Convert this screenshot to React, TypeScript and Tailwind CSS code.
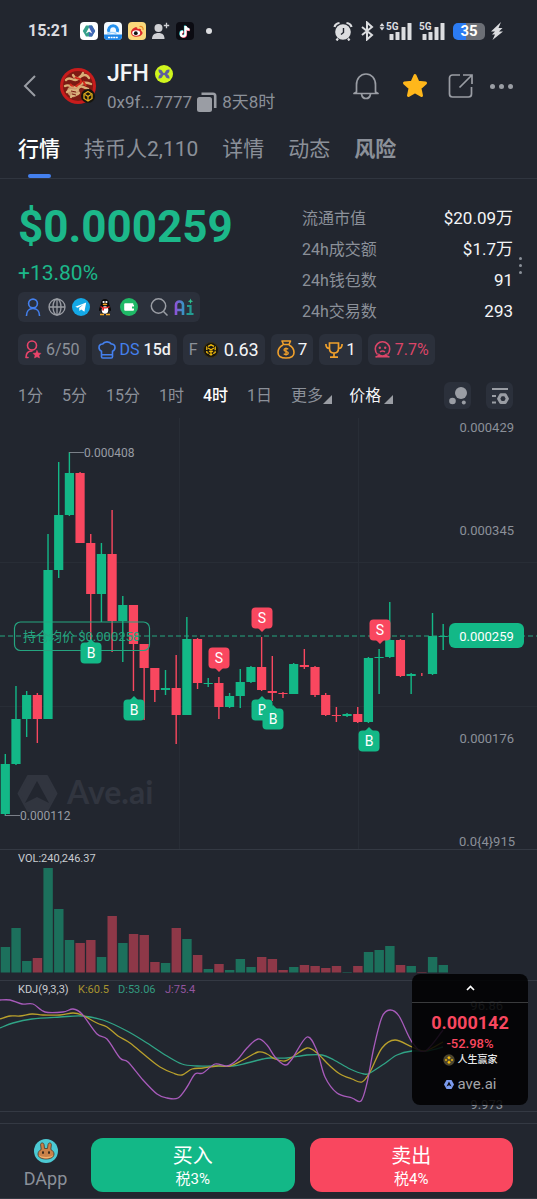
import React, { useState } from "react";

const GREEN = "#13b887";
const RED = "#f9475f";

// [open/close top, open/close bottom, high, low, volume top, rising]
type Candle = [number, number, number, number, number, boolean];

const candles: Candle[] = [
  [764, 814, 754, 816, 947, true],
  [719, 764, 686, 765, 928, true],
  [695, 719, 691, 737, 961, true],
  [695, 719, 693, 743, 958, false],
  [570, 719, 534, 719, 868, true],
  [515, 570, 462, 578, 909, true],
  [473, 515, 452, 516, 940, true],
  [473, 543, 472, 543, 943, false],
  [543, 594, 534, 640, 940, false],
  [554, 594, 543, 622, 957, true],
  [554, 621, 510, 652, 916, false],
  [605, 621, 596, 662, 943, true],
  [605, 644, 605, 691, 934, false],
  [644, 668, 644, 720, 935, false],
  [668, 690, 668, 702, 962, false],
  [688, 690, 670, 695, 963, true],
  [688, 715, 655, 744, 928, false],
  [639, 715, 617, 715, 939, true],
  [639, 683, 638, 689, 955, false],
  [683, 684, 678, 687, 969, true],
  [683, 707, 677, 719, 964, false],
  [696, 707, 693, 708, 970, true],
  [682, 696, 669, 708, 959, true],
  [667, 682, 666, 683, 967, true],
  [667, 690, 637, 691, 957, false],
  [691, 693, 656, 701, 959, false],
  [693, 694, 692, 698, 970, false],
  [664, 694, 663, 694, 967, true],
  [665, 667, 649, 669, 965, false],
  [667, 695, 666, 697, 966, false],
  [695, 715, 693, 716, 968, false],
  [715, 716, 707, 722, 966, false],
  [714, 716, 713, 717, 972, true],
  [714, 722, 707, 723, 966, false],
  [658, 722, 657, 723, 952, true],
  [657, 658, 649, 694, 950, true],
  [640, 657, 602, 658, 946, true],
  [640, 676, 639, 677, 965, false],
  [674, 676, 673, 694, 966, true],
  [674, 675, 673, 676, 972, false],
  [636, 674, 613, 675, 957, true],
  [636, 637, 624, 650, 965, true],
];

const markers: { x: number; y: number; side: "B" | "S" }[] = [
  { x: 91, y: 653, side: "B" },
  { x: 134, y: 710, side: "B" },
  { x: 262, y: 710, side: "B" },
  { x: 273, y: 719, side: "B" },
  { x: 369, y: 741, side: "B" },
  { x: 219, y: 658, side: "S" },
  { x: 262, y: 618, side: "S" },
  { x: 380, y: 630, side: "S" },
];

const kLine = [
  [0, 1019], [10, 1016], [20, 1016], [32, 1014], [43, 1015], [60, 1015], [73, 1013], [82, 1015], [97, 1023],
  [107, 1027], [118, 1036], [130, 1043], [147, 1057], [160, 1067], [173, 1073], [182, 1075], [192, 1069],
  [203, 1068], [217, 1066], [230, 1066], [243, 1060], [258, 1052], [267, 1054], [275, 1059], [285, 1061],
  [294, 1056], [307, 1048], [317, 1053], [329, 1065], [340, 1074], [352, 1079], [362, 1082], [370, 1072],
  [382, 1048], [395, 1040], [412, 1047], [425, 1051], [443, 1042],
];
const dLine = [
  [0, 1028], [13, 1023], [32, 1019], [60, 1017], [82, 1016], [103, 1020], [127, 1031], [147, 1043], [167, 1056],
  [182, 1064], [197, 1066], [213, 1066], [233, 1066], [247, 1063], [263, 1059], [270, 1058], [287, 1058],
  [307, 1055], [322, 1055], [334, 1060], [350, 1069], [364, 1074], [370, 1073], [384, 1064], [397, 1055],
  [412, 1051], [427, 1051], [443, 1047],
];
const jLine = [
  [0, 1000], [10, 1000], [22, 1004], [33, 1004], [45, 1012], [63, 1012], [73, 1009], [82, 1014], [97, 1034],
  [107, 1039], [120, 1058], [128, 1062], [143, 1080], [157, 1094], [167, 1098], [178, 1098], [187, 1087],
  [195, 1074], [203, 1073], [215, 1064], [227, 1066], [237, 1060], [247, 1048], [258, 1039], [267, 1045],
  [275, 1057], [285, 1065], [292, 1059], [307, 1037], [317, 1051], [325, 1077], [337, 1093], [352, 1098],
  [361, 1101], [367, 1083], [374, 1047], [382, 1017], [390, 1010], [399, 1016], [412, 1042], [425, 1051],
  [443, 1030],
];

function candleX(i: number) {
  return 5.3 + i * 10.68;
}

// Catmull-Rom to bezier
function smooth(pts: number[][]) {
  let d = `M${pts[0][0]} ${pts[0][1]}`;
  for (let i = 0; i < pts.length - 1; i++) {
    const p0 = pts[i - 1] ?? pts[i];
    const p1 = pts[i];
    const p2 = pts[i + 1];
    const p3 = pts[i + 2] ?? p2;
    d += `C${p1[0] + (p2[0] - p0[0]) / 6} ${p1[1] + (p2[1] - p0[1]) / 6} ${p2[0] - (p3[0] - p1[0]) / 6} ${
      p2[1] - (p3[1] - p1[1]) / 6
    } ${p2[0]} ${p2[1]}`;
  }
  return d;
}

export default function App() {
  return (
    <div className="w-full overflow-hidden bg-[#22262f] font-['Roboto','Noto_Sans_CJK_SC',sans-serif] text-[#8b9099]">
      <StatusBar />
      <Header />
      <Tabs />
      <main>
        <Summary />
        <Chips />
        <Timeframes />
        <Charts />
      </main>
      <Footer />
    </div>
  );
}

function Signal({ arrows }: { arrows?: boolean }) {
  return (
    <svg className="h-5 w-[34px]" viewBox="0 0 34 20" fill="#dcdde0">
      {arrows && <path d="M3 2l2.500 3.200h-5zM3 9.500l2.500-3.200h-5z" />}
      <text x="7" y="9" fontSize="10" fontWeight="700">5G</text>
      <rect x="10.500" y="13" width="4" height="6" rx="0.500" />
      <rect x="16.500" y="11" width="4" height="8" rx="0.500" />
      <rect x="22.500" y="6" width="4" height="13" rx="0.500" />
      <rect x="28.500" y="2" width="4" height="17" rx="0.500" />
    </svg>
  );
}

function StatusBar() {
  return (
    <div className="flex h-[62px] items-center justify-between pr-[34px] pl-7 text-[#dcdde0]">
      <div className="flex items-center gap-[6px]">
        <span className="mr-[5px] text-[16px] font-bold">15:21</span>
        <svg className="size-[18px]" viewBox="0 0 18 18">
          <rect width="18" height="18" rx="4" fill="#fff" />
          <path d="M6 3.500h6l3.200 5.500L12 14.500H6L2.800 9z" fill="#35a08a" />
          <path d="M12 3.500L15.200 9 12 14.500H9V3.500z" fill="#4267b5" />
          <path d="M9 5.500l3.200 6L9 9.800l-3.200 1.700z" fill="#fff" />
        </svg>
        <svg className="size-[18px]" viewBox="0 0 18 18">
          <rect width="18" height="18" rx="4" fill="#f4faff" />
          <path d="M0 12.500h18V14a4 4 0 01-4 4H4a4 4 0 01-4-4z" fill="#1e86e8" />
          <path d="M5 10A4.500 4.500 0 1113.200 10" fill="none" stroke="#2492f0" strokeWidth="3" />
          <path d="M3.500 12c2-2 6-2 9-.5" fill="none" stroke="#9fd2fb" strokeWidth="1.500" />
          <path d="M4 15.500h10" stroke="#fff" strokeWidth="1.600" strokeDasharray="2 .6" />
        </svg>
        <svg className="size-[18px]" viewBox="0 0 18 18">
          <rect width="18" height="18" rx="4" fill="#fbd97b" />
          <path d="M3 10.500c0-3 4-6 6-5 .8.500.5 1.500.5 1.500s3-1 3.500.5c.3.900 0 1.500 0 1.500s2 .6 1.500 2.500c-.6 2-3.500 3.300-6.500 3.300S3 13 3 10.500z" fill="#dc2a2a" />
          <ellipse cx="8.200" cy="11" rx="4" ry="2.800" fill="#fff" />
          <circle cx="7.800" cy="11.200" r="1.900" fill="#111" />
          <path d="M11.500 4.500c2.500-.6 4 1.200 3.500 3.500" fill="none" stroke="#ef8b27" strokeWidth="1.200" />
        </svg>
        <svg className="h-[18px] w-[18px]" viewBox="0 0 18 18" fill="#cfd0d4">
          <circle cx="6.500" cy="6" r="4" />
          <path d="M0 17c0-4 2.500-6 6.500-6s6 2 6 6z" />
          <path d="M14.500.800v5.400M11.800 3.500h5.400" stroke="#cfd0d4" strokeWidth="1.300" />
        </svg>
        <svg className="size-[18px]" viewBox="0 0 18 18">
          <rect width="18" height="18" rx="4" fill="#0b0b12" />
          <g fill="none" strokeWidth="2.200">
            <path d="M9 3.500v8a2.300 2.300 0 11-2.300-2.300M9 4c.4 2 1.800 3 4 3.200" stroke="#35e0e0" />
            <path d="M10 4.500v8a2.300 2.300 0 11-2.300-2.300M10 5c.4 2 1.800 3 4 3.200" stroke="#f2385a" />
            <path d="M9.500 4v8a2.300 2.300 0 11-2.300-2.300M9.500 4.500c.4 2 1.800 3 4 3.200" stroke="#fff" />
          </g>
        </svg>
        <span className="ml-[6px] size-[6px] rounded-full bg-[#dcdde0]" />
      </div>
      <div className="flex items-center">
        <svg className="h-5 w-5" viewBox="0 0 20 20">
          <circle cx="10" cy="11" r="7.800" fill="#dcdde0" />
          <path d="M1.500 6C2 4 4 2.200 6.500 2M18.500 6C18 4 16 2.200 13.500 2M5 17.500l-1.500 2M15 17.500l1.500 2" fill="none" stroke="#dcdde0" strokeWidth="2.200" />
          <path d="M10.500 7v4.500L8 13.500" fill="none" stroke="#22262f" strokeWidth="1.400" />
        </svg>
        <svg className="ml-[6px] h-5 w-[16px]" viewBox="0 0 16 20" fill="none" stroke="#dcdde0" strokeWidth="2">
          <path d="M3 6l10 8-5 4.500v-17L13 6 3 14" />
        </svg>
        <span className="ml-1"><Signal arrows /></span>
        <span className="-ml-px"><Signal /></span>
        <span className="ml-[7px] flex h-[17px] w-8 items-center justify-center rounded-[5px] bg-linear-to-r from-[#2b7bf3] from-40% to-[#6c6f76] to-40% text-[15px] leading-none font-bold text-white">
          35
        </span>
        <svg className="ml-[6px] h-[18px] w-3" viewBox="0 0 12 18" fill="#dcdde0">
          <path d="M10 0L0 9.500h4L1 12.500h3L1.500 18 12 9.500H8L11.500 6H7.500z" />
        </svg>
      </div>
    </div>
  );
}

function BnbCoin({ className }: { className: string }) {
  return (
    <svg className={className} viewBox="0 0 16 16">
      <circle cx="8" cy="8" r="7.500" fill="#16140f" stroke="#39311b" />
      <g fill="none" stroke="#f0b90b" strokeWidth="1.300">
        <path d="M8 2.800L12.200 5v5.500L8 13 3.800 10.500V5z" strokeDasharray="3.500 1" />
        <path d="M5 6l3 1.700L11 6M8 7.700V12M6 9l2 1.200L10 9" />
      </g>
    </svg>
  );
}

function Header() {
  return (
    <header className="flex h-12 items-center pr-6 pl-[22px]">
      <button aria-label="返回">
        <svg className="h-6 w-4" viewBox="0 0 16 24" fill="none" stroke="#9a9da4" strokeWidth="2">
          <path d="M13 2L3 12l10 10" />
        </svg>
      </button>
      <svg className="ml-[21px] size-[38px]" viewBox="0 0 38 38">
        <circle cx="19" cy="19" r="18" fill="#c81c1c" />
        <circle cx="19" cy="19" r="15" fill="#7c1b13" />
        <g fill="none" stroke="#d9ae76" strokeWidth="2.400" strokeLinecap="round">
          <path d="M7 13c4-5 8 3 12-1s8-6 11-1M6 19c5-3 8 4 13 0s8-4 13-2" />
          <path d="M8 25c4-5 9 2 11-3s7-1 10 0M12 30c2-4 6-1 8-4M14 8c2 4 6 5 10-2" />
        </g>
        <path d="M16 10c3 3 5 0 6 4s-4 2-5 6M11 17l4 4M24 14l3 5" fill="none" stroke="#d32a1c" strokeWidth="2" />
        <path d="M9 21c4-3 9-1 11 2s-3 8-7 7-6-6-4-9z" fill="#dcb782" opacity=".8" />
        <path d="M12 24l5 1M13 27l4 1" stroke="#7c1b13" strokeWidth="1" />
        <g transform="translate(22 22)">
          <circle cx="7" cy="7" r="7" fill="#16140f" />
          <path d="M7 2.500L11 5v4.500L7 12 3 9.500V5zM4 5.500l3 2 3-2M7 7.500v4" fill="none" stroke="#e5b01b" strokeWidth="1.300" />
        </g>
      </svg>
      <div className="ml-[10px] flex-1 pt-[3px]">
        <h1 className="flex items-center gap-[6px] text-[23px] leading-7 font-medium text-[#f3f4f6]">
          JFH
          <svg className="size-[18px]" viewBox="0 0 18 18">
            <circle cx="9" cy="9" r="9" fill="#d0f51d" />
            <path d="M3.500 4.500c2.500-.3 4 1 4.300 2.700L9 8.200l1.200-1C10.500 5.500 12 4.200 14.500 4.500c.2 2.300-.7 3.800-2.500 4.500 1.800.7 2.700 2.200 2.500 4.500-2.500.3-4-1-4.300-2.700L9 9.800l-1.200 1C7.500 12.500 6 13.800 3.500 13.500 3.300 11.200 4.200 9.700 6 9c-1.800-.7-2.700-2.200-2.500-4.500z" fill="#5d5f9e" />
          </svg>
        </h1>
        <p className="flex items-center text-[17px] leading-7">
          0x9f...7777
          <button aria-label="复制" className="mx-[5px]">
            <svg className="size-5" viewBox="0 0 20 20">
              <rect x="0" y="5" width="15" height="15" rx="2.500" fill="#9a9da4" />
              <path d="M4.500 1.800H16a2.200 2.200 0 012.200 2.200V16" fill="none" stroke="#9a9da4" strokeWidth="2.600" />
            </svg>
          </button>
          8天8时
        </p>
      </div>
      <div className="flex items-center text-[#9a9da4]">
        <button aria-label="提醒">
          <svg className="size-7" viewBox="0 0 28 28" fill="none" stroke="currentColor" strokeWidth="1.700" strokeLinejoin="round">
            <path d="M4.500 20V13C4.500 6.500 8.500 2 14 2s9.500 4.500 9.500 11v7l2.500 1.500H2zM9.500 22c.5 3 2 4.500 4.500 4.500s4-1.500 4.500-4.500" />
          </svg>
        </button>
        <button aria-label="收藏" className="ml-[21px]">
          <svg className="size-7" viewBox="0 0 28 28" fill="#ffb71b" stroke="#ffb71b" strokeWidth="3" strokeLinejoin="round">
            <path d="M14 3.500l3 6.800 7.500.8-5.600 5 1.600 7.400L14 19.800l-6.500 3.700 1.600-7.400-5.600-5 7.500-.8z" />
          </svg>
        </button>
        <button aria-label="分享" className="ml-[19px]">
          <svg className="size-[26px]" viewBox="0 0 26 26" fill="none" stroke="currentColor" strokeWidth="1.700">
            <path d="M12 2H4.500A3 3 0 001.500 5v16a3 3 0 003 3h16a3 3 0 003-3v-7M15 2h9v9M24 2L11.500 14.500" />
          </svg>
        </button>
        <button aria-label="更多" className="ml-[16px] flex gap-1">
          <span className="size-[5px] rounded-full bg-current" />
          <span className="size-[5px] rounded-full bg-current" />
          <span className="size-[5px] rounded-full bg-current" />
        </button>
      </div>
    </header>
  );
}

function Tabs() {
  const [active, setActive] = useState("行情");
  const tabs = ["行情", "持币人2,110", "详情", "动态", "风险"];

  return (
    <nav className="flex gap-6 border-b border-[#30353f] px-[18px]">
      {tabs.map((tab) => (
        <button
          key={tab}
          onClick={() => setActive(tab)}
          className={`flex flex-col items-center pt-[25px] text-[21px] leading-7 whitespace-nowrap ${
            tab === active ? "font-medium text-white" : tab === "风险" ? "font-bold" : ""
          }`}
        >
          {tab}
          <span className={`mt-[11px] h-1 w-[23px] rounded-full ${tab === active ? "bg-[#4480ee]" : ""}`} />
        </button>
      ))}
    </nav>
  );
}

function Summary() {
  const stats = [
    ["流通市值", "$20.09万"],
    ["24h成交额", "$1.7万"],
    ["24h钱包数", "91"],
    ["24h交易数", "293"],
  ];

  return (
    <section className="flex justify-between pt-6 pr-[15px] pl-[18px]">
      <div>
        <p className="text-[44px] leading-12 font-bold text-[#1cb88a]">$0.000259</p>
        <p className="mt-[10px] text-[21px] leading-6 text-[#1cb88a]">+13.80%</p>
        <Links />
      </div>
      <div className="flex items-center">
        <dl className="w-[211px] text-[16px] leading-[31px]">
          {stats.map(([label, value]) => (
            <div key={label} className="flex justify-between">
              <dt>{label}</dt>
              <dd className="text-[17px] text-[#f4f5f7]">{value}</dd>
            </div>
          ))}
        </dl>
        <button aria-label="更多数据" className="ml-[6px] flex flex-col gap-1">
          <span className="size-[3px] rounded-full bg-current" />
          <span className="size-[3px] rounded-full bg-current" />
          <span className="size-[3px] rounded-full bg-current" />
        </button>
      </div>
    </section>
  );
}

function Links() {
  return (
    <div className="mt-[7px] flex h-[30px] w-[182px] items-center gap-[6px] rounded-md bg-[#2b303b] px-[6px]">
      <a href="#holder" aria-label="持有人">
        <svg className="size-[18px]" viewBox="0 0 18 18" fill="none" stroke="#4480ee" strokeWidth="1.600" strokeLinecap="round">
          <circle cx="9" cy="5.500" r="4.400" />
          <path d="M2.500 17.500c0-4 2.500-7 6.500-7s6.500 3 6.500 7" />
        </svg>
      </a>
      <a href="#site" aria-label="官网">
        <svg className="size-[18px]" viewBox="0 0 18 18" fill="none" stroke="#9a9da4" strokeWidth="1.300">
          <circle cx="9" cy="9" r="8" />
          <ellipse cx="9" cy="9" rx="4" ry="8" />
          <path d="M1 9h16M9 1v16" />
        </svg>
      </a>
      <a href="#telegram" aria-label="Telegram">
        <svg className="size-[18px]" viewBox="0 0 18 18">
          <circle cx="9" cy="9" r="9" fill="#14a8e6" />
          <path d="M3.300 8.800l10.900-4.300-1.800 9.300-3.200-2.300-1.700 1.600-.4-3 4.600-3.900-6 3.600z" fill="#fff" />
        </svg>
      </a>
      <a href="#qq" aria-label="QQ">
        <svg className="size-[18px]" viewBox="0 0 18 18">
          <path d="M9 1C6.300 1 5 2.800 5 5.500c0 1.500-2 4-2 6 0 1 .3 1.500.6 1.500s.9-.8.900-.8C5 15 6.800 16.200 9 16.200s4-1.200 4.500-4c0 0 .6.800.9.800s.6-.5.600-1.500c0-2-2-4.500-2-6C13 2.800 11.700 1 9 1z" fill="#0b0b0b" />
          <ellipse cx="9" cy="12" rx="3.300" ry="3.800" fill="#fff" />
          <circle cx="7.600" cy="4" r="1.100" fill="#fff" />
          <circle cx="10.400" cy="4" r="1.100" fill="#fff" />
          <ellipse cx="9" cy="6.300" rx="2.400" ry=".9" fill="#f5a623" />
          <path d="M4.500 8c3 1.600 6 1.600 9 0v1.500c-2 1-4 1.200-5.500 1v2H6.200v-2.500c-.7-.2-1.400-.5-1.700-.8z" fill="#e42525" />
          <path d="M4 16.500h4M10 16.500h4" stroke="#f5a623" strokeWidth="1.500" />
        </svg>
      </a>
      <a href="#wallet" aria-label="钱包">
        <svg className="size-[18px]" viewBox="0 0 18 18">
          <circle cx="9" cy="9" r="9" fill="#20b967" />
          <path d="M5.200 5.300h8v1.500h.8v1.700h-2v2h2v1.300a1 1 0 01-1 1H5.200a1 1 0 01-1-1V6.300a1 1 0 011-1z" fill="#fff" />
        </svg>
      </a>
      <a href="#search" aria-label="搜索" className="ml-[6px]">
        <svg className="size-[18px]" viewBox="0 0 18 18" fill="none" stroke="#9a9da4" strokeWidth="1.500">
          <circle cx="8.500" cy="8" r="7.200" />
          <path d="M13.500 13.500l4 4" />
        </svg>
      </a>
      <a href="#ai" aria-label="Ai">
        <svg className="h-[18px] w-5" viewBox="0 0 20 18" fill="none" strokeWidth="2.600">
          <defs>
            <linearGradient id="aiFill" x1="0" y1="0" x2="1" y2="0">
              <stop offset="0" stopColor="#8a55d8" />
              <stop offset="1" stopColor="#3a93c4" />
            </linearGradient>
          </defs>
          <path d="M2 17V7a3.500 3.500 0 013.500-3.500A3.500 3.500 0 019 7v10M2 12h7" stroke="url(#aiFill)" />
          <path d="M13 8h3.500v9M12.500 16h7" stroke="#239b91" strokeWidth="2.200" />
          <path d="M16.500.5l.8 1.900 1.900.8-1.900.8-.8 1.900-.8-1.900-1.900-.8 1.900-.8z" fill="#2fc08e" />
        </svg>
      </a>
    </div>
  );
}

function Chips() {
  const chip = "flex h-[31px] items-center rounded-md bg-[#2b303b] px-[6px] text-[16px] whitespace-nowrap";

  return (
    <section className="mt-[7px] flex gap-[6px] px-[18px]">
      <span className={`${chip} gap-1`}>
        <svg className="h-[19px] w-[18px]" viewBox="0 0 18 19" fill="none" stroke="#e8446a" strokeWidth="1.600" strokeLinecap="round">
          <circle cx="8" cy="5.500" r="4.500" />
          <path d="M2 17.500c0-4 2-6.500 6-6.500M2 17.500h2" />
          <path d="M13 10.500l1.200 2.500 2.800.3-2 2 .5 2.700-2.500-1.300-2.500 1.300.5-2.700-2-2 2.800-.3z" fill="#e8446a" strokeWidth=".5" />
        </svg>
        6/50
      </span>
      <span className={`${chip} gap-1`}>
        <svg className="size-[18px]" viewBox="0 0 18 18" fill="none" stroke="#4480ee" strokeWidth="1.600" strokeLinejoin="round">
          <path d="M3.500 10.200A4 4 0 011 6.300c0-2 1.600-3.500 3.700-3.300C5.500 1.600 7 .9 9 .9s3.500.7 4.300 2.100C15.400 2.800 17 4.300 17 6.300a4 4 0 01-2.500 3.900v5.500c0 .8-.5 1.300-1.300 1.300H4.800c-.8 0-1.300-.5-1.300-1.300zM3.500 13.800h11" />
        </svg>
        <span className="text-[#4480ee]">DS</span>
        <span className="font-medium text-[#f0f1f3]">15d</span>
      </span>
      <span className={`${chip} gap-[5px]`}>
        <span>F</span>
        <BnbCoin className="size-4" />
        <span className="text-[18px] text-[#f4f5f7]">0.63</span>
      </span>
      <span className={`${chip} gap-[3px]`}>
        <svg className="h-[19px] w-[18px]" viewBox="0 0 18 19" fill="none" stroke="#f0a02c" strokeWidth="1.600" strokeLinejoin="round">
          <path d="M5 1h8.500L12 4.500H6.500zM6 5C3 6.500 1 9.500 1 12.500 1 16.500 4 18 9 18s8-1.500 8-5.500C17 9.500 15 6.500 12 5" />
          <path d="M11.200 9.200C9.800 8 7 8.300 7 10s4.300 1.200 4.300 3-3 2-4.600.8M9 7.500v8" strokeWidth="1.300" />
        </svg>
        <span className="text-[17px] text-[#f4f5f7]">7</span>
      </span>
      <span className={`${chip} gap-[3px]`}>
        <svg className="size-[18px]" viewBox="0 0 18 18" fill="none" stroke="#f0a02c" strokeWidth="1.700">
          <path d="M4.500 2h9v5.500c0 3-1.500 4.500-4.500 4.500S4.500 10.500 4.500 7.500zM9 12v4M5 16.200h8M4.500 7.500C2 7.500.9 6 .9 3M13.500 7.500c2.500 0 3.600-1.500 3.600-4.500" />
        </svg>
        <span className="text-[17px] text-[#f4f5f7]">1</span>
      </span>
      <span className={`${chip} gap-1 text-[#dc4568]`}>
        <svg className="size-[17px]" viewBox="0 0 17 17" fill="none" stroke="currentColor" strokeWidth="1.600">
          <path d="M3.500 13.500C2 12 1.300 10 1.300 8a7.200 7.200 0 0114.400 0c0 2-.7 4-2.200 5.500M1.500 15.800c1.500.2 3-.5 3.500-2 1 1.500 6 1.500 7 0 .5 1.500 2 2.200 3.500 2zM6 10.800c1.500-1 3.500-1 5 0" />
          <circle cx="5.800" cy="6.800" r="1.200" fill="currentColor" stroke="none" />
          <circle cx="11.200" cy="6.800" r="1.200" fill="currentColor" stroke="none" />
        </svg>
        7.7%
      </span>
    </section>
  );
}

function Corner() {
  return (
    <svg className="mt-2 size-[9px]" viewBox="0 0 9 9" fill="#9a9da4">
      <path d="M9 0v9H0z" />
    </svg>
  );
}

function Timeframes() {
  const [active, setActive] = useState("4时");

  return (
    <div className="mt-[17px] flex h-[27px] items-center justify-between pr-6 pl-[18px] text-[16px] whitespace-nowrap">
      <div className="flex items-center gap-[19px]">
        {["1分", "5分", "15分", "1时", "4时", "1日"].map((t) => (
          <button key={t} onClick={() => setActive(t)} className={t === active ? "font-medium text-white" : ""}>
            {t}
          </button>
        ))}
        <button className="flex items-center" aria-haspopup="menu">
          更多
          <Corner />
        </button>
        <button className="-ml-[2px] flex items-center gap-[3px] text-[#f4f5f7]" aria-haspopup="menu">
          价格
          <Corner />
        </button>
      </div>
      <div className="flex gap-[15px]">
        <button aria-label="气泡图" className="flex size-[27px] items-center justify-center rounded-md bg-[#2b303b]">
          <svg className="size-[18px]" viewBox="0 0 18 18" fill="#9a9da4">
            <circle cx="12" cy="6" r="6" />
            <circle cx="3.500" cy="14" r="3.300" />
            <circle cx="14.800" cy="15.500" r="2" />
          </svg>
        </button>
        <button aria-label="图表设置" className="flex size-[27px] items-center justify-center rounded-md bg-[#2b303b]">
          <svg className="size-[18px]" viewBox="0 0 18 18" fill="none" stroke="#9a9da4" strokeWidth="2">
            <path d="M1 2h16M1 9h4M1 15.500h4" />
            <path d="M9.800 7.800h4.400l2.200 3.900-2.200 3.900H9.800l-2.200-3.900z" strokeWidth="3" strokeLinejoin="round" />
          </svg>
        </button>
      </div>
    </div>
  );
}

function Marker({ x, y, side }: { x: number; y: number; side: "B" | "S" }) {
  const buy = side === "B";
  return (
    <g transform={`translate(${x} ${y})`}>
      <path d={buy ? "M-5 -9L0 -14 5 -9z" : "M-5 9L0 14 5 9z"} fill={buy ? GREEN : RED} />
      <rect x="-10.500" y="-10.500" width="21" height="21" rx="4" fill={buy ? GREEN : RED} />
      <text x="0" y="5" textAnchor="middle" fontSize="14" fill="#fff">
        {side}
      </text>
    </g>
  );
}

function PriceChart() {
  return (
    <svg className="block w-full" viewBox="0 418 537 431" aria-label="K线图">
      <path d="M179.500 418v431M358.500 418v431M0 562.500h537M0 706.500h537" stroke="#282d36" />

      <g fill="#31353f">
        <path d="M28 776h19l9.500 17.500L47 811H28l-9.500-17.500z" stroke="#31353f" strokeWidth="2" strokeLinejoin="round" />
        <path d="M37 781l12 22-12-6-12 6z" fill="#22262f" />
        <text x="67" y="804" fontSize="32" fontWeight="700" className="font-['Lato']">
          Ave.ai
        </text>
      </g>

      {candles.map(([top, bottom, high, low, , up], i) => {
        const x = candleX(i);
        return (
          <g key={i} fill={up ? GREEN : RED}>
            <rect x={x - 0.7} y={high} width="1.400" height={low - high} />
            {i !== 39 && <rect x={x - 4.6} y={top} width="9.200" height={bottom - top} />}
          </g>
        );
      })}

      <path d="M0 636h537" stroke="#25a580" strokeWidth="1.200" strokeDasharray="5 3" />
      <rect x="14.500" y="622" width="135" height="28.500" rx="6" fill="none" stroke="#25a580" strokeWidth="1.200" />
      <text x="23" y="641" fontSize="13" fill="#25a580">
        持仓均价 $0.000258
      </text>

      {markers.map((m, i) => (
        <Marker key={i} {...m} />
      ))}

      <path d="M69 452.500h15M5 815.500h15" stroke="#7b8089" />
      <g fontSize="12" fill="#989ca4">
        <text x="84" y="457">0.000408</text>
        <text x="20" y="820">0.000112</text>
      </g>
      <g fontSize="13" fill="#8b9099" textAnchor="end">
        <text x="514" y="432">0.000429</text>
        <text x="514" y="535">0.000345</text>
        <text x="514" y="743">0.000176</text>
        <text x="515" y="846">{"0.0{4}915"}</text>
      </g>
      <rect x="449" y="623" width="75" height="25" rx="6" fill={GREEN} />
      <text x="486.500" y="641" fontSize="13" textAnchor="middle" fill="#fff">
        0.000259
      </text>
    </svg>
  );
}

function Charts() {
  return (
    <section className="relative mt-[9px]">
      <PriceChart />
      <svg className="block w-full border-t border-[#343943]" viewBox="0 850 537 130" aria-label="成交量">
        <text x="18" y="862" fontSize="11" fill="#c9ccd1">
          VOL:240,246.37
        </text>
        {candles.map(([, , , , top, up], i) => (
          <rect key={i} x={candleX(i) - 4.6} y={top} width="9.400" height={972.5 - top} fill={up ? "#1c705c" : "#8e3848"} />
        ))}
      </svg>
      <svg className="block w-full border-y border-[#343943]" viewBox="0 981 537 130" aria-label="KDJ">
        <g fontSize="11">
          <text x="18" y="993" fill="#c9ccd1">KDJ(9,3,3)</text>
          <text x="78" y="993" fill="#a8942f">K:60.5</text>
          <text x="118" y="993" fill="#339b80">D:53.06</text>
          <text x="165" y="993" fill="#93559f">J:75.4</text>
        </g>
        <g fill="none" strokeWidth="1.300">
          <path d={smooth(dLine)} stroke="#30a486" />
          <path d={smooth(kLine)} stroke="#b9a02c" />
          <path d={smooth(jLine)} stroke="#a85bbb" />
        </g>
        <g fontSize="13" fill="#8b9099" textAnchor="end">
          <text x="503" y="1010">96.86</text>
          <text x="503" y="1109">9.973</text>
        </g>
      </svg>
      <FloatingPrice />
    </section>
  );
}

function FloatingPrice() {
  return (
    <aside className="absolute right-[9px] bottom-[7px] flex h-[131px] w-[116px] flex-col items-center rounded-lg bg-black/85">
      <button aria-label="收起" className="flex h-[29px] w-full items-center justify-center border-b border-[#3a3b3d]">
        <svg className="h-[6px] w-[9px]" viewBox="0 0 9 6" fill="none" stroke="#fff" strokeWidth="1.700">
          <path d="M1 5l3.500-3.500L8 5" />
        </svg>
      </button>
      <p className="mt-[10px] text-[18px] leading-5 font-bold text-[#f9475f]">0.000142</p>
      <p className="mt-[3px] text-[13px] leading-4 font-medium text-[#f9475f]">-52.98%</p>
      <p className="flex items-center gap-[3px] text-[10px] leading-4 font-medium text-[#e8e9eb]">
        <svg className="size-3" viewBox="0 0 12 12">
          <circle cx="6" cy="6" r="5.700" fill="#4d462f" />
          <path d="M6 2l1.800 1.800L6 5.500 4.200 3.800zM6 6.500l1.800 1.800L6 10 4.200 8.300zM3 4.800L4.200 6 3 7.200 1.800 6zM9 4.800L10.200 6 9 7.200 7.800 6z" fill="#f0b90b" />
        </svg>
        人生赢家
      </p>
      <p className="mt-[6px] flex items-center gap-1 text-[15px] leading-5 text-[#a3a4a8]">
        <svg className="h-[9px] w-[10px]" viewBox="0 0 10 9">
          <path d="M2.500 0h5L10 4.500 7.500 9h-5L0 4.500z" fill="#7b9bee" />
          <path d="M5 1.500l2.500 5L5 5.200 2.500 6.500z" fill="#0c0d10" />
        </svg>
        ave.ai
      </p>
    </aside>
  );
}

function Footer() {
  return (
    <footer className="mt-[11px] flex items-center border-y border-[#343943] pt-[14px] pr-6 pb-[6px]">
      <button className="flex w-[91px] shrink-0 flex-col items-center">
        <svg className="size-6" viewBox="0 0 24 24">
          <circle cx="12" cy="12" r="12" fill="#4cc9d3" />
          <path d="M7.200 10.500L6.600 5.500c0-2 3-2.200 3.400 0l.5 4h3l.5-4c.4-2.200 3.400-2 3.400 0l-.6 5c2 1 3.200 2.700 3.200 4.500 0 3.300-3.300 5-8 5s-8-1.700-8-5c0-1.800 1.200-3.500 3.200-4.500z" fill="#c98149" stroke="#4d3526" strokeWidth=".8" />
          <path d="M4.500 16c2 4.500 13 4.500 15 0-3 2.500-12 2.500-15 0z" fill="#f0b16d" />
          <ellipse cx="9" cy="13.500" rx=".9" ry="1.500" fill="#2e211a" />
          <ellipse cx="15" cy="13.500" rx=".9" ry="1.500" fill="#2e211a" />
        </svg>
        <span className="mt-1 text-[18px] leading-6">DApp</span>
      </button>
      <div className="grid flex-1 grid-cols-2 gap-[15px] text-white">
        <button className="flex h-[54px] flex-col items-center rounded-xl bg-[#13b887] pt-[5px]">
          <span className="text-[20px] leading-[26px]">买入</span>
          <span className="text-[15px] leading-5">税3%</span>
        </button>
        <button className="flex h-[54px] flex-col items-center rounded-xl bg-[#f9475f] pt-[5px]">
          <span className="text-[20px] leading-[26px]">卖出</span>
          <span className="text-[15px] leading-5">税4%</span>
        </button>
      </div>
    </footer>
  );
}
